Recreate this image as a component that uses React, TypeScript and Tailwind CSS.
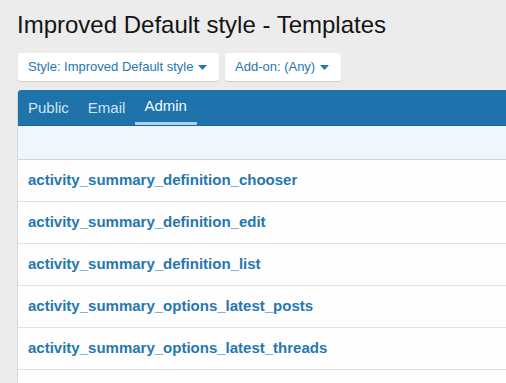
const templates = [
  'activity_summary_definition_chooser',
  'activity_summary_definition_edit',
  'activity_summary_definition_list',
  'activity_summary_options_latest_posts',
  'activity_summary_options_latest_threads',
]

function Caret() {
  return (
    <svg width="9" height="5" viewBox="0 0 9 5" className="ml-[5px] inline-block">
      <path d="M0 0h9L4.5 5z" fill="currentColor" />
    </svg>
  )
}

export default function App() {
  return (
    <div
      className="h-[383px] bg-[#ececec] overflow-hidden pl-[17px] pt-[10px]"
      style={{ fontFamily: '"Liberation Sans", Arial, sans-serif' }}
    >
      <h1 className="text-[24px] leading-[30px] text-[#141414] font-normal">
        Improved Default style - Templates
      </h1>

      <div className="flex gap-[6px] mt-[13px] ml-px">
        <button className="h-[28px] w-[201px] bg-white rounded-[3px] shadow-[0_1px_1px_rgba(0,0,0,0.12)] text-[13px] text-[#2577b1] pl-[10px] text-left flex items-center">
          Style: Improved Default style
          <Caret />
        </button>
        <button className="h-[28px] w-[116px] bg-white rounded-[3px] shadow-[0_1px_1px_rgba(0,0,0,0.12)] text-[13px] text-[#2577b1] pl-[10px] text-left flex items-center">
          Add-on: (Any)
          <Caret />
        </button>
      </div>

      <div className="mt-[9px] border-l border-[#d8d8d8] bg-white">
        <div className="h-[36px] bg-[#1d73aa] rounded-tl-[3px] flex items-end text-[15px] pl-[10px] gap-[19px] border-b border-[#18639a]">
          <span className="text-[#cfe5f6] h-[35px] flex items-center pt-[1px]">Public</span>
          <span className="text-[#cfe5f6] h-[35px] flex items-center pt-[1px]">Email</span>
          <span className="text-[#f4faff] h-[35px] flex items-center pt-[1px] px-[9px] -ml-[9px] w-[62px] border-b-[3px] border-[#a9d3f0]">
            Admin
          </span>
        </div>
        <div className="h-[34px] bg-[#f0f6fd] border-b border-[#d4d4d4]" />
        {templates.map(t => (
          <div
            key={t}
            className="h-[42px] flex items-center pl-[10px] border-b border-[#e3e3e3] bg-[#fefefe]"
          >
            <span className="text-[15px] font-bold text-[#2577b1]">{t}</span>
          </div>
        ))}
        <div className="h-[42px] bg-[#fefefe]" />
      </div>
    </div>
  )
}
